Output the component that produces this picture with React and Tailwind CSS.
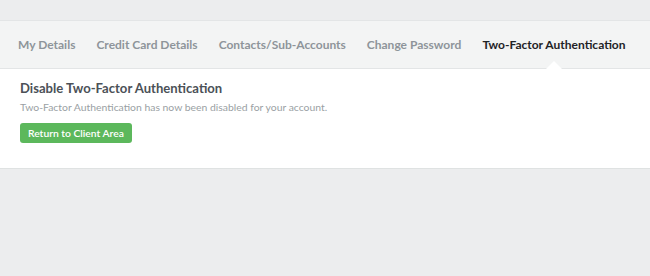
import React from 'react';

const tabs = ['My Details', 'Credit Card Details', 'Contacts/Sub-Accounts', 'Change Password', 'Two-Factor Authentication'];

const App = () => {
  const active = 'Two-Factor Authentication';

  return (
    <div className="min-h-[276px] bg-[#ecedee] pt-5 font-['Lato',sans-serif]">
      {/* Tabs */}
      <div className="h-[49px] border-t border-b border-[#e3e5e6] bg-[#f3f4f4]">
        <ul className="flex h-full items-center pl-[18px] gap-[21px]">
          {tabs.map((t) => (
            <li key={t} className="relative h-full flex items-center shrink-0 whitespace-nowrap">
              <span className={`text-[12px] font-bold ${t === active ? 'text-[#1f2326]' : 'text-[#8e949a]'}`}>{t}</span>
              {t === active && (
                <span className="absolute bottom-[-1px] left-1/2 -translate-x-1/2 w-0 h-0 border-l-[8px] border-r-[8px] border-b-[8px] border-l-transparent border-r-transparent border-b-white" />
              )}
            </li>
          ))}
        </ul>
      </div>

      {/* Panel */}
      <div className="bg-white border-b border-[#dfe2e2] h-[100px] px-5 pt-[9px]">
        <h2 className="text-[13.1px] font-bold text-[#4b5157] leading-5">Disable Two-Factor Authentication</h2>
        <p className="mt-px text-[10.4px] text-[#9a9fa4] leading-4">Two-Factor Authentication has now been disabled for your account.</p>
        <button className="mt-[8px] h-5 px-[8px] rounded-[3px] bg-[#5cb85c] text-white text-[10.3px] font-semibold leading-5">
          Return to Client Area
        </button>
      </div>
    </div>
  );
};

export default App;
